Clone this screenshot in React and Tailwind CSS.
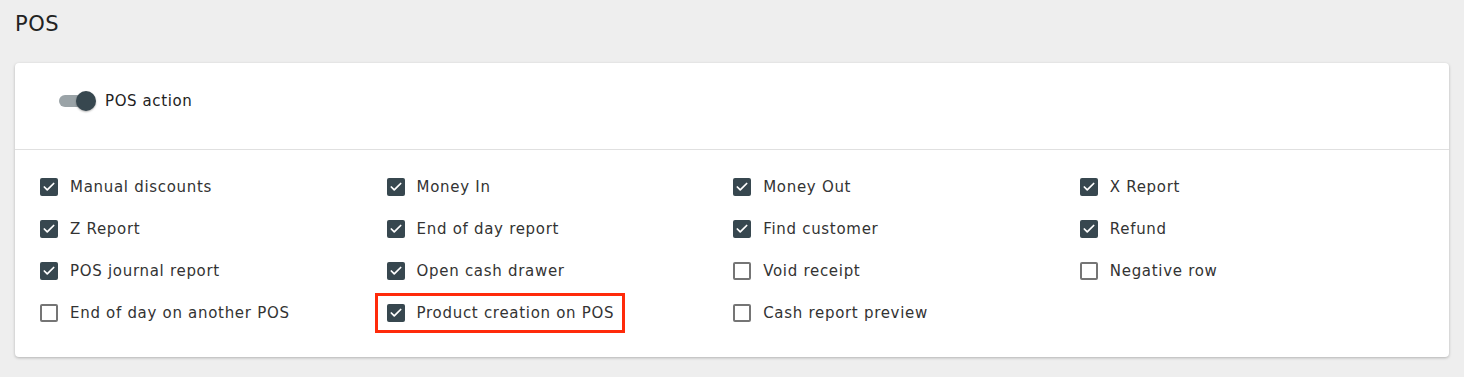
import { Check } from 'lucide-react';

const items = [
  { label: 'Manual discounts', checked: true },
  { label: 'Money In', checked: true },
  { label: 'Money Out', checked: true },
  { label: 'X Report', checked: true },
  { label: 'Z Report', checked: true },
  { label: 'End of day report', checked: true },
  { label: 'Find customer', checked: true },
  { label: 'Refund', checked: true },
  { label: 'POS journal report', checked: true },
  { label: 'Open cash drawer', checked: true },
  { label: 'Void receipt', checked: false },
  { label: 'Negative row', checked: false },
  { label: 'End of day on another POS', checked: false },
  { label: 'Product creation on POS', checked: true, highlight: true },
  { label: 'Cash report preview', checked: false },
];

function Box({ checked }) {
  if (checked) {
    return (
      <span className="flex h-[18px] w-[18px] shrink-0 items-center justify-center rounded-[2px] bg-[#37474f]">
        <Check size={14} strokeWidth={3} className="text-white" />
      </span>
    );
  }
  return <span className="h-[18px] w-[18px] shrink-0 rounded-[2px] border-2 border-[#757575] bg-white" />;
}

export default function App() {
  return (
    <div className="min-h-[377px] bg-[#eeeeee] px-[15px] pt-[11px] font-['DejaVu_Sans',sans-serif] text-[#333]">
      <h1 className="text-[21px] leading-[26px] tracking-[0.5px] text-[#222]">POS</h1>

      <div className="mt-[26px] rounded bg-white shadow-[0_1px_3px_rgba(0,0,0,0.25)]">
        <div className="flex h-[87px] items-start border-b border-[#e0e0e0] pl-[44px] pt-[28px]">
          <div className="relative mt-[4px] h-[12px] w-[32px] rounded-full bg-[#9aa3a7]">
            <span className="absolute -top-[4px] left-[17px] h-[20px] w-[20px] rounded-full bg-[#37474f] shadow-[0_1px_2px_rgba(0,0,0,0.3)]" />
          </div>
          <span className="ml-[14px] text-[15px] font-medium leading-[20px] tracking-[0.6px] text-[#222]">POS action</span>
        </div>

        <div className="grid grid-cols-[repeat(4,346.6px)] gap-y-[24px] px-[25px] pb-[35px] pt-[28px]">
          {items.map((it) => (
            <div key={it.label} className="flex h-[18px] items-center">
              <div className="relative flex items-center gap-[12px]">
                {it.highlight && (
                  <span className="absolute -bottom-[11px] -left-[12px] -right-[11px] -top-[11px] border-[3px] border-[#ff2a0a]" />
                )}
                <Box checked={it.checked} />
                <span className="text-[15px] leading-[18px] tracking-[0.7px] text-[#333]">{it.label}</span>
              </div>
            </div>
          ))}
        </div>
      </div>
    </div>
  );
}
